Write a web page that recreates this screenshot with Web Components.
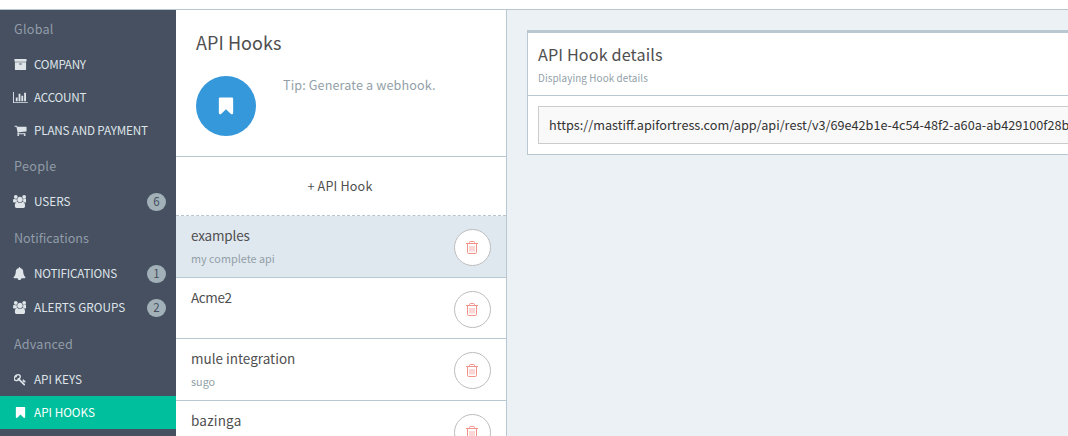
<!DOCTYPE html>
<html lang="en">
<head>
<meta charset="utf-8">
<title>API Hooks</title>
<style>
html,body{margin:0;height:100%;overflow:hidden}
body{font-family:"Noto Sans CJK SC","Noto Sans",sans-serif;color:#4f4f4f;background:#fff}
</style>
</head>
<body>
<hooks-app></hooks-app>
<script>
const ICONS = {
  archive: ['0 0 1792 1792', 'M1088 832q0-26-19-45t-45-19h-256q-26 0-45 19t-19 45 19 45 45 19h256q26 0 45-19t19-45zm576-192v960q0 26-19 45t-45 19h-1408q-26 0-45-19t-19-45v-960q0-26 19-45t45-19h1408q26 0 45 19t19 45zm64-448v256q0 26-19 45t-45 19h-1536q-26 0-45-19t-19-45v-256q0-26 19-45t45-19h1536q26 0 45 19t19 45z'],
  chart: ['0 0 2048 1792', 'M640 896v512h-256v-512h256zm384-512v1024h-256v-1024h256zm1024 1152v128h-2048v-1536h128v1408h1920zm-640-896v768h-256v-768h256zm384-384v1152h-256v-1152h256z'],
  cart: ['0 0 1792 1792', 'M704 1536q0 52-38 90t-90 38-90-38-38-90 38-90 90-38 90 38 38 90zm896 0q0 52-38 90t-90 38-90-38-38-90 38-90 90-38 90 38 38 90zm128-1088v512q0 24-16.5 42.5t-40.5 21.5l-1044 122q13 60 13 70 0 16-24 64h920q26 0 45 19t19 45-19 45-45 19h-1024q-26 0-45-19t-19-45q0-11 8-31.5t16-36 21.5-40 15.5-29.5l-177-823h-204q-26 0-45-19t-19-45 19-45 45-19h256q16 0 28.5 6.5t19.5 15.5 13 24.5 8 26 5.5 29.5 4.5 26h1201q26 0 45 19t19 45z'],
  users: ['64 0 1920 1792', 'M657 896q-162 5-265 128h-134q-82 0-138-40.5t-56-118.5q0-353 124-353 6 0 43.5 21t97.5 42.5 119 21.5q67 0 133-23-5 37-5 66 0 159 92 293zm1071 637q0 120-73 189.5t-194 69.5h-874q-121 0-194-69.5t-73-189.5q0-53 3.5-103.5t14-109 26.5-108.5 43-97.5 62-81 85.5-53.5 111.5-20q10 0 43 21.5t73 48 107 48 135 21.5 135-21.5 107-48 73-48 43-21.5q61 0 111.5 20t85.5 53.5 62 81 43 97.5 26.5 108.5 14 109 3.5 103.5zm-1024-1277q0 106-75 181t-181 75-181-75-75-181 75-181 181-75 181 75 75 181zm704 384q0 159-112.5 271.5t-271.5 112.5-271.5-112.5-112.5-271.5 112.5-271.5 271.5-112.5 271.5 112.5 112.5 271.5zm576 225q0 78-56 118.5t-138 40.5h-134q-103-123-265-128 92-134 92-293 0-29-5-66 66 23 133 23 59 0 119-21.5t97.5-42.5 43.5-21q124 0 124 353zm-128-609q0 106-75 181t-181 75-181-75-75-181 75-181 181-75 181 75 75 181z'],
  bell: ['0 0 1792 1792', 'M1728 1408q0 52-38 90t-90 38h-448q0 106-75 181t-181 75-181-75-75-181h-448q-52 0-90-38t-38-90q50-42 91-88t85-119.5 74.5-158.5 50-206 19.5-260q0-152 117-282.5t307-158.5q-8-19-8-39 0-40 28-68t68-28 68 28 28 68q0 20-8 39 190 28 307 158.5t117 282.5q0 139 19.5 260t50 206 74.5 158.5 85 119.5 91 88z'],
  key: ['64 0 1792 1792', 'M832 512q0-80-56-136t-136-56-136 56-56 136q0 42 19 83-41-19-83-19-80 0-136 56t-56 136 56 136 136 56 136-56 56-136q0-42-19-83 41 19 83 19 80 0 136-56t56-136zm851 704q0 17-49 66t-66 49q-9 0-28.5-16t-36.5-33-38.5-40-24.5-26l-96 96 220 220q28 28 28 68 0 42-39 81t-81 39q-40 0-68-28l-671-671q-176 131-365 131-163 0-265.5-102.5t-102.5-265.5q0-160 95-313t248-248 313-95q163 0 265.5 102.5t102.5 265.5q0 189-131 365l355 355 96-96q-3-3-26-24.5t-40-38.5-33-36.5-16-28.5q0-17 49-66t66-49q13 0 23 10 6 6 46 44.5t82 79.5 86.5 86 73 78 28.5 41z'],
  bookmark: ['0 0 1792 1792', 'M1420 128q23 0 44 9 33 13 52.5 41t19.5 62v1289q0 34-19.5 62t-52.5 41q-19 8-44 8-48 0-83-32l-441-424-441 424q-36 33-83 33-23 0-44-9-33-13-52.5-41t-19.5-62v-1289q0-34 19.5-62t52.5-41q21-9 44-9h1048z']
};

const define = (name, html, setup) => {
  const t = document.createElement('template');
  t.innerHTML = html;
  customElements.define(name, class extends HTMLElement {
    connectedCallback() {
      if (this.shadowRoot) return;
      this.attachShadow({mode: 'open'}).append(t.content.cloneNode(true));
      if (setup) setup(this, this.shadowRoot);
    }
  });
};

define('fa-icon', `<style>
  :host{display:flex;justify-content:center;align-items:center}
  svg{display:block;height:var(--size,13px);fill:currentColor}
</style><svg><path/></svg>`, (el, root) => {
  const [box, d] = ICONS[el.getAttribute('name')];
  const [, , w, h] = box.split(' ').map(Number);
  const svg = root.querySelector('svg');
  svg.setAttribute('viewBox', box);
  svg.style.aspectRatio = w + '/' + h;
  root.querySelector('path').setAttribute('d', d);
});

define('nav-heading', `<style>
  :host{display:block;height:38px;line-height:38px;padding-left:14px;font-size:12.6px;color:#929ca9;white-space:nowrap}
</style><slot></slot>`);

define('nav-item', `<style>
  :host{display:flex;align-items:center;height:33px;padding:0 10px 0 12px;color:#dfe4e9;font-size:11.7px;white-space:nowrap}
  :host([badge]){height:34px}
  :host([active]){background:#00bf9c;color:#fff}
  fa-icon{width:17px;margin-right:5px}
  :host([badge]) fa-icon{margin:0 6px 1px -1px}
  .label{flex:1;line-height:20px;padding-bottom:2px}
  .badge{width:19px;height:18px;border-radius:9px;background:#a2b1b8;color:#465060;font-size:11.5px;line-height:17px;text-align:center;letter-spacing:0}
</style><span class="label"><slot></slot></span>`, (el, root) => {
  const icon = document.createElement('fa-icon');
  icon.setAttribute('name', el.getAttribute('icon'));
  root.querySelector('.label').before(icon);
  if (el.hasAttribute('badge')) {
    const b = document.createElement('span');
    b.className = 'badge';
    b.textContent = el.getAttribute('badge');
    root.append(b);
  }
});

define('side-nav', `<style>
  :host{display:block;width:176px;flex:none;background:#465060;overflow:hidden}
</style><slot></slot>`);

define('trash-button', `<style>
  :host{display:flex;align-items:center;justify-content:center;box-sizing:border-box;width:37px;height:37px;border:1px solid #bdbdbd;border-radius:50%;background:#fff;flex:none}
  svg{display:block;margin:0 1px 1px 0}
</style><svg width="12" height="13" viewBox="0 0 12 13" fill="none" stroke="#f2938a"><path d="M0 2.5h12M3.5 2.5V1.5q0-1 1-1h3q1 0 1 1v1M1.5 2.5v8.7q0 1.3 1.3 1.3h6.4q1.3 0 1.3-1.3V2.5"/><path d="M4 5v5.5M6 5v5.5M8 5v5.5" stroke-width=".9" stroke="#f5a79f"/></svg>`);

define('hook-row', `<style>
  :host{display:flex;box-sizing:border-box;height:62px;border-bottom:1px solid #b9c8d0;padding:13px 15px 0;justify-content:space-between}
  :host([selected]){background:#e0e8ef}
  .name{font-size:13.5px;line-height:20px;margin-top:-4px}
  .note{font-size:10.8px;line-height:16px;margin-top:5px;color:#929fa8;letter-spacing:.02px}
</style><div><div class="name"><slot></slot></div><div class="note"><slot name="note"></slot></div></div><trash-button></trash-button>`);

define('hooks-panel', `<style>
  :host{display:block;box-sizing:border-box;width:331px;flex:none;border-right:1px solid #b9c8d0;background:#fff;overflow:hidden}
  header{box-sizing:border-box;height:147px;padding:19px 20px 0;border-bottom:1px solid #b9c8d0}
  h1{margin:0;font-size:18px;line-height:26px;font-weight:400;letter-spacing:.06px}
  .intro{display:flex;gap:27px;margin-top:21px}
  .disc{display:flex;align-items:center;justify-content:center;width:60px;height:60px;border-radius:50%;background:#3498db;color:#fff;--size:20px}
  .tip{font-size:12.6px;line-height:18px;color:#929fa8;letter-spacing:.13px}
  .add{box-sizing:border-box;height:59px;line-height:57px;padding-right:2px;text-align:center;font-size:12.6px;letter-spacing:.18px;border-bottom:1px dashed #b9c4cc}
</style>
<header><h1>API Hooks</h1><div class="intro"><div class="disc"><fa-icon name="bookmark"></fa-icon></div><div class="tip">Tip: Generate a webhook.</div></div></header>
<div class="add">+ API Hook</div><slot></slot>`);

define('detail-card', `<style>
  :host{display:block;box-sizing:border-box;width:620px;height:125px;border:1px solid #b9c8d0;border-top-width:3px;background:#fff}
  header{box-sizing:border-box;height:63px;padding:8px 10px 0;border-bottom:1px solid #b9c8d0}
  h2{margin:0;font-size:16.2px;line-height:26px;font-weight:400;letter-spacing:.125px}
  .sub{font-size:9.9px;line-height:16px;margin-top:3px;letter-spacing:.09px;color:#929fa8}
  .url{box-sizing:border-box;height:38px;margin:10px 10px 0;padding-left:10px;border:1px solid #ccc;background:#f9f9f9;font-size:12.66px;line-height:35px;color:#333;white-space:nowrap}
</style>
<header><h2><slot name="title"></slot></h2><div class="sub"><slot name="sub"></slot></div></header>
<div class="url"><slot></slot></div>`);

define('hooks-app', `<style>
  :host{display:flex;flex-direction:column;height:436px;overflow:hidden}
  .top{box-sizing:border-box;height:10px;flex:none;background:#fff;border-bottom:1px solid #b9c8d0}
  .body{display:flex;flex:1;min-height:0}
  main{flex:1;min-width:0;overflow:hidden;background:#ecf1f5;padding:20px 0 0 20px}
</style>
<div class="top"></div>
<div class="body">
<side-nav>
  <nav-heading style="letter-spacing:.25px">Global</nav-heading>
  <nav-item icon="archive" style="letter-spacing:-.28px">COMPANY</nav-item>
  <nav-item icon="chart" style="letter-spacing:-.2px">ACCOUNT</nav-item>
  <nav-item icon="cart" style="letter-spacing:-.18px">PLANS AND PAYMENT</nav-item>
  <nav-heading style="letter-spacing:.3px">People</nav-heading>
  <nav-item icon="users" badge="6">USERS</nav-item>
  <nav-heading>Notifications</nav-heading>
  <nav-item icon="bell" badge="1" style="letter-spacing:-.18px">NOTIFICATIONS</nav-item>
  <nav-item icon="users" badge="2" style="letter-spacing:.07px">ALERTS GROUPS</nav-item>
  <nav-heading style="letter-spacing:.2px">Advanced</nav-heading>
  <nav-item icon="key">API KEYS</nav-item>
  <nav-item icon="bookmark" active style="letter-spacing:.02px">API HOOKS</nav-item>
</side-nav>
<hooks-panel>
  <hook-row selected style="letter-spacing:-.18px">examples<span slot="note">my complete api</span></hook-row>
  <hook-row style="height:61px;letter-spacing:-.4px">Acme2</hook-row>
  <hook-row>mule integration<span slot="note">sugo</span></hook-row>
  <hook-row style="letter-spacing:.2px">bazinga</hook-row>
</hooks-panel>
<main><detail-card><span slot="title">API Hook details</span><span slot="sub">Displaying Hook details</span>https://mastiff.apifortress.com/app/api/rest/v3/69e42b1e-4c54-48f2-a60a-ab429100f28b</detail-card></main>
</div>`);
</script>
</body>
</html>
